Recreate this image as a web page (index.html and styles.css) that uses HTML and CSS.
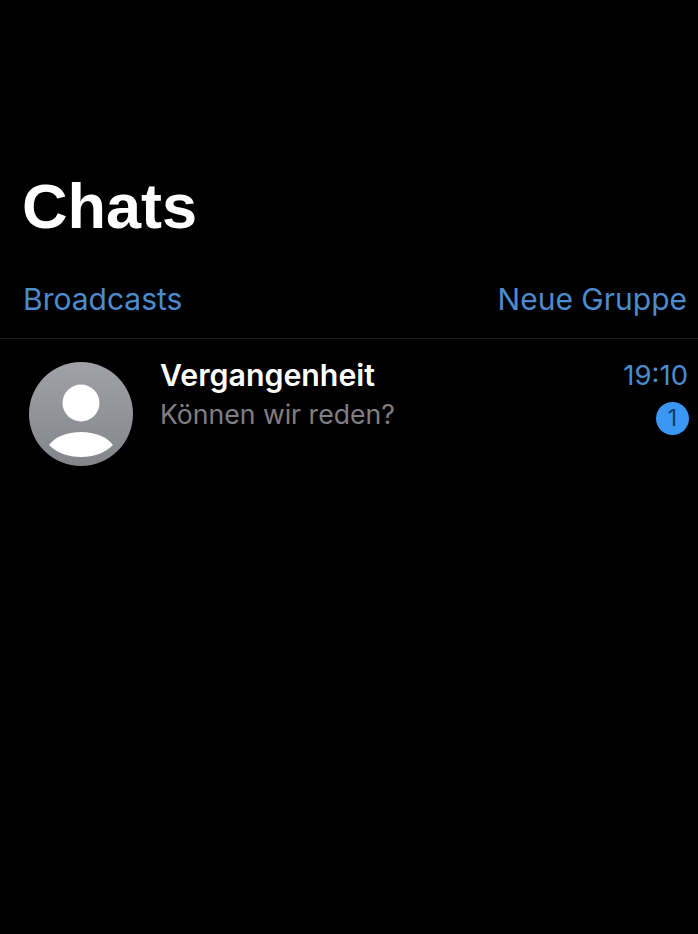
FILE: index.html
```html
<!DOCTYPE html>
<html>
<head>
  <link rel="stylesheet" href="styles.css">
</head>
<body>
  <h1 class="chats-title">Chats</h1>

  <div class="chats-actions">
    <span class="chats-link">Broadcasts</span>
    <span class="chats-link">Neue Gruppe</span>
  </div>

  <div class="chat-row">
    <svg class="chat-avatar" viewBox="0 0 104 104">
      <defs>
        <linearGradient id="avatarFill" x1="0" y1="0" x2="0" y2="1">
          <stop offset="0" stop-color="#a1a2a8"/>
          <stop offset="1" stop-color="#84858b"/>
        </linearGradient>
      </defs>
      <circle cx="52" cy="52" r="52" fill="url(#avatarFill)"/>
      <circle cx="52" cy="41" r="18.5" fill="#fff"/>
      <path d="M20 83 C26 75 38 70 52 70 C66 70 78 75 84 83 C76 91 65 95 52 95 C39 95 28 91 20 83 Z" fill="#fff"/>
    </svg>
    <div class="chat-text">
      <div class="chat-name">Vergangenheit</div>
      <div class="chat-preview">Können wir reden?</div>
    </div>
    <div class="chat-meta">
      <div class="chat-time">19:10</div>
      <div class="chat-badge">1</div>
    </div>
  </div>
</body>
</html>
```
FILE: styles.css
```css
/* Page */
html, body {
  background-color: #000;
}

body {
  margin: 0;
  height: 934px;
  overflow: hidden;
  font-family: "Liberation Sans", Arial, sans-serif;
}

/* Big title */
.chats-title {
  margin: 0;
  padding: 173px 0 0 22px;
  font-size: 63px;
  line-height: 66px;
  font-weight: bold;
  color: #fff;
}

/* Broadcasts / Neue Gruppe */
.chats-actions {
  display: flex;
  justify-content: space-between;
  padding: 43px 11px 22px 23px;
  border-bottom: 1px solid #1c1c1e;
}

.chats-link {
  font-family: Inter, "Liberation Sans", sans-serif;
  font-size: 30px;
  line-height: 34px;
  color: #4d8bcf;
}

/* Chat row */
.chat-row {
  display: flex;
  padding: 23px 10px 0 29px;
}

.chat-avatar {
  width: 104px;
  height: 104px;
  flex-shrink: 0;
  margin-right: 27px;
}

.chat-text {
  flex-grow: 1;
  margin-top: -5px;
}

.chat-name {
  font-family: Inter, "Liberation Sans", sans-serif;
  font-size: 30.3px;
  line-height: 36px;
  font-weight: 600;
  color: #fff;
}

.chat-preview {
  margin-top: 4px;
  font-family: Inter, "Liberation Sans", sans-serif;
  font-size: 26.6px;
  line-height: 34px;
  color: #7f7f84;
}

.chat-meta {
  display: flex;
  flex-direction: column;
  align-items: flex-end;
  margin-top: -5px;
}

.chat-time {
  font-family: Inter, "Liberation Sans", sans-serif;
  font-size: 27.5px;
  line-height: 36px;
  color: #4d8bcf;
}

.chat-badge {
  width: 33px;
  height: 33px;
  margin-top: 9px;
  margin-right: -1px;
  border-radius: 50%;
  background-color: #3b97f5;
  color: #123a66;
  font-family: Inter, "Liberation Sans", sans-serif;
  font-size: 23px;
  line-height: 33px;
  text-align: center;
}
```
